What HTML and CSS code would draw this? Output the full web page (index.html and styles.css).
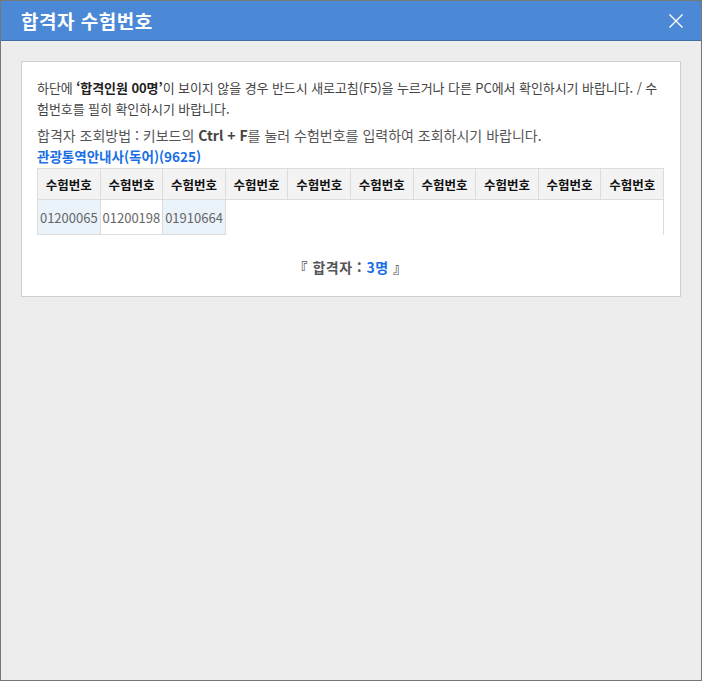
FILE: index.html
```html
<!DOCTYPE html>
<html lang="ko">
<head>
<meta charset="utf-8">
<title>합격자 수험번호</title>
<link rel="stylesheet" href="styles.css">
</head>
<body>
<div class="window">
  <div class="titlebar">
    <h1 class="title">합격자 수험번호</h1>
    <span class="close" aria-label="닫기">
      <svg width="16" height="16" viewBox="0 0 16 16"><path d="M1.5 1.5 L14.5 14.5 M14.5 1.5 L1.5 14.5" stroke="#fff" stroke-width="1.4" fill="none"/></svg>
    </span>
  </div>
  <div class="content">
    <div class="card">
      <p class="notice">하단에 <b>‘합격인원 00명’</b>이 보이지 않을 경우 반드시 새로고침(F5)을 누르거나 다른 PC에서 확인하시기 바랍니다. / 수험번호를 필히 확인하시기 바랍니다.</p>
      <p class="howto">합격자 조회방법 : 키보드의 <b>Ctrl + F</b>를 눌러 수험번호를 입력하여 조회하시기 바랍니다.</p>
      <p class="exam">관광통역안내사(독어)(9625)</p>
      <div class="table">
        <div class="row head">
          <div class="th">수험번호</div><div class="th">수험번호</div><div class="th">수험번호</div><div class="th">수험번호</div><div class="th">수험번호</div><div class="th">수험번호</div><div class="th">수험번호</div><div class="th">수험번호</div><div class="th">수험번호</div><div class="th">수험번호</div>
        </div>
        <div class="row body">
          <div class="td alt">01200065</div><div class="td">01200198</div><div class="td alt">01910664</div>
        </div>
      </div>
      <p class="summary">『 합격자 : <span class="count">3명</span> 』</p>
    </div>
  </div>
</div>
</body>
</html>
```
FILE: styles.css
```css
* { box-sizing: border-box; }
html, body { margin: 0; padding: 0; }
body {
  width: 702px;
  height: 681px;
  font-family: "Noto Sans CJK KR", "Noto Sans", sans-serif;
  color: #555;
}
.window {
  width: 702px;
  height: 681px;
  border: 1px solid #777;
  background: #ededed;
  display: flex;
  flex-direction: column;
}
.titlebar {
  height: 40px;
  background: #4b89d7;
  border-bottom: 1px solid #3d6ea8;
  display: flex;
  align-items: center;
  justify-content: space-between;
  padding: 0 17px 0 20px;
}
.title {
  margin: 0;
  font-size: 19px;
  font-weight: bold;
  color: #fff;
  line-height: 20px;
  letter-spacing: 0.5px;
}
.close {
  display: flex;
  width: 16px;
  height: 16px;
}
.content {
  padding: 20px;
}
.card {
  background: #fff;
  border: 1px solid #cfcfcf;
  padding: 15px 16px 15px 15px;
}
.notice {
  margin: 0;
  font-size: 13px;
  line-height: 21px;
  letter-spacing: -0.08px;
  color: #444;
}
.notice b { color: #222; }
.howto {
  margin: 6px 0 0;
  font-size: 14px;
  line-height: 21px;
  color: #555;
}
.howto b { color: #444; }
.exam {
  margin: 0;
  font-size: 13.5px;
  line-height: 21px;
  font-weight: bold;
  color: #1a6fe6;
}
.table {
  margin-top: 1px;
  width: 627px;
  border-right: 1px solid #dcdcdc;
}
.row {
  display: grid;
  grid-template-columns: repeat(10, 1fr);
}
.th {
  height: 32px;
  background: #f3f3f3;
  border-top: 1px solid #dcdcdc;
  border-left: 1px solid #dcdcdc;
  border-bottom: 1px solid #dcdcdc;
  font-size: 12.5px;
  font-weight: bold;
  color: #111;
  display: flex;
  align-items: center;
  justify-content: center;
}
.td {
  height: 35px;
  border-left: 1px solid #dcdcdc;
  border-bottom: 1px solid #dcdcdc;
  font-size: 13px;
  color: #666;
  display: flex;
  align-items: center;
  justify-content: center;
  white-space: nowrap;
}
.td:nth-child(3) { border-right: 1px solid #dcdcdc; margin-right: -1px; }
.td.alt { background: #eaf3fa; }
.summary {
  margin: 22px 0 4px;
  text-align: center;
  font-size: 14px;
  line-height: 20px;
  font-weight: bold;
  letter-spacing: 0.5px;
  color: #555;
}
.count { color: #1a6fe6; }
```
